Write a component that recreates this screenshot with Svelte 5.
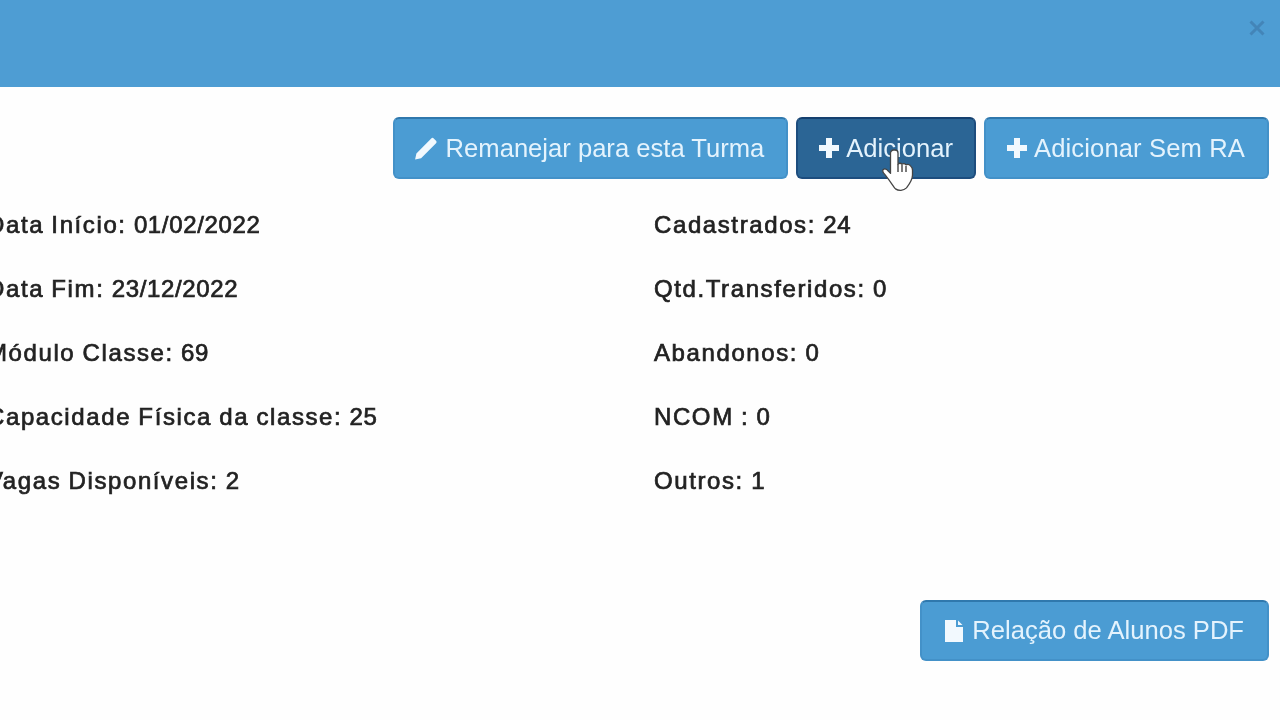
<script>
  const left = [['Data Início:', '01/02/2022'], ['Data Fim:', '23/12/2022'], ['Módulo Classe:', '69'], ['Capacidade Física da classe:', '25'], ['Vagas Disponíveis:', '2']];
  const right = [['Cadastrados:', '24'], ['Qtd.Transferidos:', '0'], ['Abandonos:', '0'], ['NCOM :', '0'], ['Outros:', '1']];
</script>

<div class="page">
  <header class="top">
    <button class="close" aria-label="Fechar">
      <svg width="18" height="18" viewBox="0 0 18 18"><path d="M2.5 2.5l13 13M15.5 2.5l-13 13" /></svg>
    </button>
  </header>

  <main class="body">
    <div class="actions">
      <button class="btn">
        <svg class="ic pencil" viewBox="0 0 22 22"><path d="M1 21.500l1.200-5.500L15.800 2.300a1.600 1.600 0 0 1 2.300 0l2.100 2.100a1.600 1.600 0 0 1 0 2.300L6.500 20.300z" /></svg>
        Remanejar para esta Turma
      </button>
      <button class="btn active">
        <svg class="ic" viewBox="0 0 24 24"><path d="M9 2h6v7h7v6h-7v7H9v-7H2V9h7z" /></svg>
        Adicionar
        <svg class="cursor" viewBox="0 0 34 42" width="34" height="42">
          <path d="M13 1c2 0 3 1.500 3 3v11c1.500-1 3-.8 4 .3 1.200-.8 3-.6 4 .6 1.500-.8 3.500-.2 4.500 1 1 1 2 2 2 4v5c0 5-3 9-6 13-3 3-8 3-11 1-2-2-6-9-12-16-1-1.500-1-3 0-3.500 1.500-1 3.500 0 5 2l2 2V4c0-1.500 1.500-3 3-3z" />
          <path class="lines" d="M16 15v8M20 16v7M24 17v6" />
        </svg>
      </button>
      <button class="btn wide">
        <svg class="ic" viewBox="0 0 24 24"><path d="M9 2h6v7h7v6h-7v7H9v-7H2V9h7z" /></svg>
        Adicionar Sem RA
      </button>
    </div>

    <div class="info">
      <div class="col">
        {#each left as [label, value]}<p>{label} <span>{value}</span></p>{/each}
      </div>
      <div class="col">
        {#each right as [label, value]}<p>{label} <span>{value}</span></p>{/each}
      </div>
    </div>

    <div class="footer">
      <button class="btn pdf">
        <svg class="ic doc" viewBox="0 0 20 24"><path d="M1 1h11v7h7v15H1zM14 1.500L18.500 6H14z" /></svg>
        Relação de Alunos PDF
      </button>
    </div>
  </main>
</div>

<style>
  :global(body) {
    margin: 0;
    background: #fff;
    overflow: hidden;
  }
  .page {
    width: 1280px;
    height: 720px;
    overflow: hidden;
    font-family: "Liberation Sans", Arial, sans-serif;
    color: #333;
    background: #fefefe;
    filter: blur(0.55px);
  }
  .top {
    height: 87px;
    background: #4e9dd3;
    display: flex;
    justify-content: flex-end;
    padding: 19px 14px 0 0;
    box-sizing: border-box;
  }
  .close {
    all: unset;
    width: 18px;
    height: 18px;
  }
  .close svg {
    display: block;
    fill: none;
    stroke: #4385b8;
    stroke-width: 3;
  }
  .body {
    padding: 30px 11px 0 0;
  }
  .actions {
    display: flex;
    justify-content: flex-end;
    gap: 8px;
  }
  .btn {
    position: relative;
    height: 62px;
    box-sizing: border-box;
    display: flex;
    align-items: center;
    gap: 5px;
    padding: 0 22px 0 19px;
    font: 25.6px "Liberation Sans", Arial, sans-serif;
    color: #e4f3fd;
    background: #4b9cd3;
    border: 2px solid #4391c8;
    border-top-color: #2f78ad;
    border-radius: 6px;
    white-space: nowrap;
  }
  .active {
    background: #2b6595;
    border-color: #1d4d7e;
    border-top-color: #15406f;
    padding-right: 21px;
  }
  .wide {
    letter-spacing: 0.12px;
  }
  .pdf {
    height: 61px;
    padding-right: 23px;
  }
  .ic {
    width: 24px;
    height: 24px;
    fill: #f2f9fe;
    flex: none;
  }
  .pencil {
    margin-right: 3px;
  }
  .doc {
    width: 20px;
    margin: 0 3px;
  }
  .cursor {
    position: absolute;
    left: 84px;
    top: 30px;
  }
  .cursor path {
    fill: #fff;
    stroke: #444;
    stroke-width: 1.300;
    stroke-linejoin: round;
  }
  .cursor .lines {
    fill: none;
    stroke-width: 1.400;
  }
  .info {
    display: grid;
    grid-template-columns: 667px 1fr;
    margin: 14px 0 0 -13px;
  }
  .col p {
    margin: 0;
    height: 64px;
    line-height: 64px;
    font-size: 24px;
    letter-spacing: 1.6px;
    word-spacing: -1px;
    color: #222;
    -webkit-text-stroke: 0.7px #222;
    white-space: nowrap;
  }
  .col span {
    letter-spacing: 0.65px;
  }
  .footer {
    display: flex;
    justify-content: flex-end;
    margin-top: 87px;
  }
</style>
